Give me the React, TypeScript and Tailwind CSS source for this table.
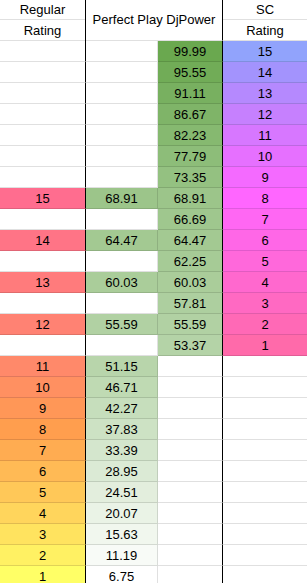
import React from 'react'

type Row = {
  reg?: string
  regBg?: string
  pp?: string
  ppBg?: string
  dj?: string
  djBg?: string
  sc?: string
  scBg?: string
}

const rows: Row[] = [
  { dj: '99.99', djBg: 'bg-[#6aa84f]', sc: '15', scBg: 'bg-[#91a3fc]' },
  { dj: '95.55', djBg: 'bg-[#71ac57]', sc: '14', scBg: 'bg-[#a393fd]' },
  { dj: '91.11', djBg: 'bg-[#78b060]', sc: '13', scBg: 'bg-[#b589fe]' },
  { dj: '86.67', djBg: 'bg-[#7fb468]', sc: '12', scBg: 'bg-[#c680fe]' },
  { dj: '82.23', djBg: 'bg-[#86b970]', sc: '11', scBg: 'bg-[#d777ff]' },
  { dj: '77.79', djBg: 'bg-[#8dbd79]', sc: '10', scBg: 'bg-[#e670ff]' },
  { dj: '73.35', djBg: 'bg-[#94c181]', sc: '9', scBg: 'bg-[#f46aff]' },
  { reg: '15', regBg: 'bg-[#ff6d8f]', pp: '68.91', ppBg: 'bg-[#9cc58a]', dj: '68.91', djBg: 'bg-[#9cc58a]', sc: '8', scBg: 'bg-[#ff66ff]' },
  { dj: '66.69', djBg: 'bg-[#9fc78e]', sc: '7', scBg: 'bg-[#ff67f3]' },
  { reg: '14', regBg: 'bg-[#ff7486]', pp: '64.47', ppBg: 'bg-[#a3c992]', dj: '64.47', djBg: 'bg-[#a3c992]', sc: '6', scBg: 'bg-[#ff67e7]' },
  { dj: '62.25', djBg: 'bg-[#a6cb96]', sc: '5', scBg: 'bg-[#ff68db]' },
  { reg: '13', regBg: 'bg-[#ff7b7c]', pp: '60.03', ppBg: 'bg-[#aacd9a]', dj: '60.03', djBg: 'bg-[#aacd9a]', sc: '4', scBg: 'bg-[#ff68ce]' },
  { dj: '57.81', djBg: 'bg-[#adcf9f]', sc: '3', scBg: 'bg-[#ff69c2]' },
  { reg: '12', regBg: 'bg-[#ff8273]', pp: '55.59', ppBg: 'bg-[#b1d1a3]', dj: '55.59', djBg: 'bg-[#b1d1a3]', sc: '2', scBg: 'bg-[#ff69b6]' },
  { dj: '53.37', djBg: 'bg-[#b4d3a7]', sc: '1', scBg: 'bg-[#ff6aaa]' },
  { reg: '11', regBg: 'bg-[#ff896a]', pp: '51.15', ppBg: 'bg-[#b8d5ab]' },
  { reg: '10', regBg: 'bg-[#ff9061]', pp: '46.71', ppBg: 'bg-[#bfdab3]' },
  { reg: '9', regBg: 'bg-[#ff9757]', pp: '42.27', ppBg: 'bg-[#c6debc]' },
  { reg: '8', regBg: 'bg-[#ff9e4e]', pp: '37.83', ppBg: 'bg-[#cde2c4]' },
  { reg: '7', regBg: 'bg-[#ffac51]', pp: '33.39', ppBg: 'bg-[#d4e6cd]' },
  { reg: '6', regBg: 'bg-[#ffba55]', pp: '28.95', ppBg: 'bg-[#dbead5]' },
  { reg: '5', regBg: 'bg-[#ffc858]', pp: '24.51', ppBg: 'bg-[#e3eedd]' },
  { reg: '4', regBg: 'bg-[#ffd55c]', pp: '20.07', ppBg: 'bg-[#eaf3e6]' },
  { reg: '3', regBg: 'bg-[#ffe35f]', pp: '15.63', ppBg: 'bg-[#f1f7ee]' },
  { reg: '2', regBg: 'bg-[#fff163]', pp: '11.19', ppBg: 'bg-[#f8fbf7]' },
  { reg: '1', regBg: 'bg-[#ffff66]', pp: '6.75', ppBg: 'bg-white' },
]

function Cell({ text, bg, className }: { text?: string; bg?: string; className: string }) {
  return (
    <div className={`h-[21px] flex items-center justify-center border-b border-black/[0.12] ${bg ?? 'bg-white'} ${className}`}>
      {text}
    </div>
  )
}

export default function App() {
  return (
    <div className="w-[307px] h-[583px] overflow-hidden bg-white text-[13px] leading-none text-black font-['Liberation_Sans',Arial,sans-serif]">
      <div className="-mt-[1px]">
        {/* Header */}
        <div className="flex">
          <div className="w-[86px] border-r border-black flex flex-col">
            <Cell text="Regular" className="" />
            <Cell text="Rating" className="" />
          </div>
          <div className="w-[137px] h-[42px] border-r border-b border-r-black border-b-black/[0.12] flex items-center justify-center">
            Perfect Play DjPower
          </div>
          <div className="flex-1 flex flex-col">
            <Cell text="SC" className="" />
            <Cell text="Rating" className="" />
          </div>
        </div>

        {/* Data rows */}
        {rows.map((r, i) => (
          <div key={i} className="flex">
            <Cell text={r.reg} bg={r.regBg} className="w-[86px] border-r border-r-black" />
            <Cell text={r.pp} bg={r.ppBg} className="w-[72px] border-r border-r-black/[0.12]" />
            <Cell text={r.dj} bg={r.djBg} className="w-[65px] border-r border-r-black" />
            <Cell text={r.sc} bg={r.scBg} className="flex-1" />
          </div>
        ))}
      </div>
    </div>
  )
}
